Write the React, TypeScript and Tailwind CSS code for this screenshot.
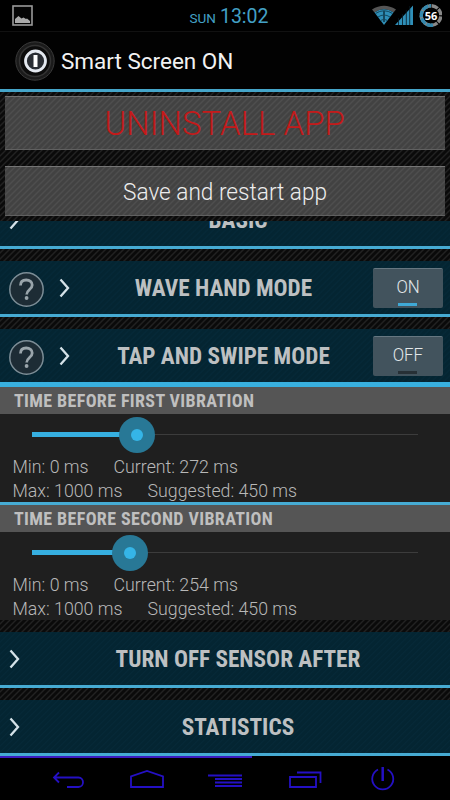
import type { ReactNode } from "react";

interface SliderProps {
  title: string;
  current: number;
  suggested: number;
  max: number;
}

const stripes =
  "bg-[#0c0c0c] bg-[repeating-linear-gradient(135deg,#0a0a0a_0px,#0a0a0a_1.4px,#222_2.8px,#0a0a0a_4.243px)]";
const buttonBg =
  "bg-[repeating-linear-gradient(135deg,#424242_0px,#424242_1.4px,#4e4e4e_2.8px,#424242_4.243px)]";

const StatusBar = () => (
  <div className="flex h-[31px] shrink-0 items-start justify-between bg-black">
    <svg className="mt-[5px] ml-3" width="21" height="21" viewBox="0 0 21 21">
      <rect x="1" y="1" width="19" height="19" fill="#050505" stroke="#999" strokeWidth="1.6" />
      <path d="M3 18v-4l3.500-3 3 2.500 2-1 2.500 1.500 1-.5 3 2.500v2z" fill="#aaa" />
    </svg>
    <div className="mt-[5px] ml-[54px] flex items-baseline gap-[4px] text-[#43a0c6]">
      <span className="text-[13.500px] leading-6">SUN</span>
      <span className="text-[19.500px] leading-6">13:02</span>
    </div>
    <div className="mt-[4px] mr-2 flex">
      <svg width="71" height="24" viewBox="-1 0 71 24">
        <g transform="translate(-1 0)">
          <path d="M1 5.500Q13 -2 25 5.500L22.500 8.500Q13 2 3.500 8.500z" fill="#555" />
          <path d="M3.500 8.500Q13 2 22.500 8.500L13 21z" fill="#2f8fb8" />
          <path d="M4.500 9.500Q13 4 21.500 9.500M7 13Q13 9 19 13M9.500 16.500Q13 14 16.500 16.500" fill="none" stroke="#14495f" strokeWidth="1" />
          <path d="M13 7v11" stroke="#14495f" strokeWidth="2" />
          <path d="M24 21L42 1.500V21z" fill="#2f8fb8" />
          <path d="M27.500 14v7M31.500 10v11M35.300 6v15M38.700 2v19" stroke="#071820" strokeWidth="0.8" />
        </g>
        <circle cx="59" cy="11.500" r="9.800" fill="none" stroke="#888" strokeWidth="3.400" strokeDasharray="6.700 1" transform="rotate(-86 59 11.500)" />
        <path d="M61 21.100A9.800 9.800 0 1 1 59 1.700" fill="none" stroke="#3488ad" strokeWidth="3.400" strokeDasharray="6.700 1" />
        <text x="59" y="15.500" textAnchor="middle" fill="#fff" fontSize="11" fontWeight="700" fontFamily="Open Sans, sans-serif">56</text>
      </svg>
    </div>
  </div>
);

const ActionBar = () => (
  <div className="flex h-[61px] shrink-0 items-center border-t border-b-[3px] border-t-[#111] border-b-[#45a5c9] bg-[#020202] pl-[15px]">
    <svg width="40" height="40" viewBox="0 0 40 40">
      <circle cx="20" cy="20" r="19.200" fill="#1b1b1b" stroke="#3a3a3a" strokeWidth="1" />
      <circle cx="20" cy="20" r="15.500" fill="#0c0c0c" stroke="#333" strokeWidth="1.500" />
      <circle cx="20.500" cy="20" r="10" fill="#292d33" stroke="#e4e9f0" strokeWidth="2.800" />
      <path d="M20.500 14v12" stroke="#fff" strokeWidth="4" />
    </svg>
    <span className="ml-[6px] pt-[3px] text-[22.500px] whitespace-nowrap text-[#f2f2f2]">Smart Screen ON</span>
  </div>
);

const Chevron = ({ className }: { className: string }) => (
  <svg className={className} width="12" height="20" viewBox="0 0 12 20">
    <path d="M1.500 1.500L9 10 1.500 18.500" fill="none" stroke="#d5e2e8" strokeWidth="2.300" />
  </svg>
);

const HelpIcon = () => (
  <svg className="mt-1 ml-2" width="37" height="37" viewBox="0 0 37 37">
    <circle cx="18.500" cy="18.500" r="16.700" fill="#1d2c35" stroke="#7c8d96" strokeWidth="1.500" />
    <path d="M12.500 14.500C12.500 10.500 15 9 18.200 9c3.500 0 6 2 6 5 0 4.500-5.500 4.500-5.500 9.500" fill="none" stroke="#9aa5ab" strokeWidth="2.800" />
    <circle cx="18.600" cy="27" r="1.900" fill="#9aa5ab" />
  </svg>
);

const Toggle = ({ on }: { on: boolean }) => (
  <div className="relative mr-[7px] flex h-10 w-[70px] items-center justify-center rounded-[2px] border-t border-t-[#667781] bg-[#42535d] text-[17.500px] font-light text-[#e3e8ea]">
    <span className="scale-x-[0.96] pb-px">{on ? "ON" : "OFF"}</span>
    <span className={`absolute bottom-[2px] left-[25px] h-[3px] w-[19px] ${on ? "bg-[#3fa9d6]" : "bg-[#273036]"}`} />
  </div>
);

interface RowProps {
  title: string;
  left: ReactNode;
  right?: ReactNode;
}

// rows without a toggle have their title centred in the space after the chevron
const Row = ({ title, left, right }: RowProps) => (
  <div className="relative flex h-[53px] shrink-0 items-center justify-between bg-[#042633] bg-[repeating-linear-gradient(135deg,#042532_0px,#042532_2px,#062938_3px,#042532_4.243px)]">
    <div className="flex items-center">{left}</div>
    <span
      className={`absolute right-0 scale-x-[0.968] text-center text-[24px] font-bold text-[#bdc0c2] [font-stretch:75%] ${right ? "-left-[3px]" : "left-[26px]"}`}
    >
      {title}
    </span>
    {right}
  </div>
);

const Line = () => <div className="h-[3px] shrink-0 bg-[#46abd3]" />;
const Gap = () => <div className={`h-3 shrink-0 ${stripes}`} />;

const SliderPanel = ({ title, current, suggested, max }: SliderProps) => (
  <>
    <div className="flex h-[27px] shrink-0 items-center bg-[#555] pl-[14px] text-[18px] font-bold tracking-[0.36px] text-[#bfbfbf] [font-stretch:75%]">
      <span>{title}</span>
    </div>
    <div className="h-[88px] shrink-0 bg-[#1f1f1f] text-[17.750px] leading-6 font-light whitespace-nowrap text-[#b8b8b8]">
      <div className="relative mr-8 ml-8 flex h-[41px] items-center">
        <div className="h-px w-full bg-[#3c3c3c]" />
        <div
          className="absolute left-0 h-[5px] bg-[#36afe0]"
          style={{ width: `${(current / max) * 100}%` }}
        />
        <div
          className="absolute flex size-9 -translate-x-1/2 items-center justify-center rounded-full bg-[#287896]"
          style={{ left: `${(current / max) * 100}%` }}
        >
          <div className="size-3 rounded-full bg-[#35b5e7]" />
        </div>
      </div>
      <div className="flex gap-[25px] pl-[12.500px]">
        <span>Min: 0 ms</span>
        <span>Current: {current} ms</span>
      </div>
      <div className="flex gap-[25px] pl-[12.500px]">
        <span>Max: {max} ms</span>
        <span>Suggested: {suggested} ms</span>
      </div>
    </div>
  </>
);

const NavBar = () => (
  <div className="h-[45px] shrink-0 bg-black">
    <div className="h-[2px] w-[252px] bg-[#3c1bc0]" />
    <svg width="450" height="43" viewBox="0 757 450 43" fill="none" stroke="#2410c4" strokeWidth="1.800">
      <path d="M59 771.500l-5 5 5 5M54 776.500h24.500c6 0 6 9.500 0 9.500H67" />
      <path d="M131 786v-10.500l16-5.500 16 5.500V786z" />
      <path d="M208 774.500h34M215 778h27M215 781.500h27M215 785h27" />
      <path d="M290 776h26v10h-26zM297 771.500h23.500V782" />
      <path d="M378 768.500a10.500 10.500 0 1 0 9.500 0" />
      <path d="M382.700 766v14" strokeWidth="2.500" />
    </svg>
  </div>
);

export default function App() {
  return (
    <div className="flex h-[800px] w-[450px] flex-col overflow-hidden bg-black font-[Roboto,sans-serif]">
      <StatusBar />
      <ActionBar />
      <div className={`relative z-10 flex h-[129px] shrink-0 flex-col px-[5px] pt-1 ${stripes}`}>
        <div className={`flex h-[54px] items-center justify-center border-t border-b border-t-[#707070] border-b-[#606060] text-[34px] font-light text-[#c41a1a] ${buttonBg}`}>
          <span className="scale-x-[0.972] pt-px">UNINSTALL APP</span>
        </div>
        <div className={`mt-4 flex h-[50px] items-center justify-center border-t border-b border-t-[#757575] border-b-[#606060] text-[23.500px] font-light text-[#ededed] ${buttonBg}`}>
          <span className="scale-x-[0.962] pt-[3px]">Save and restart app</span>
        </div>
      </div>
      <div className="-mt-7 flex shrink-0 flex-col">
        <Row title="BASIC" left={<Chevron className="ml-[9px]" />} />
        <Line />
      </div>
      <Gap />
      <Row
        title="WAVE HAND MODE"
        left={<><HelpIcon /><Chevron className="ml-[14px]" /></>}
        right={<Toggle on />}
      />
      <Line />
      <Gap />
      <Row
        title="TAP AND SWIPE MODE"
        left={<><HelpIcon /><Chevron className="ml-[14px]" /></>}
        right={<Toggle on={false} />}
      />
      <div className="h-[5px] shrink-0 bg-[#38b0df]" />
      <SliderPanel title="TIME BEFORE FIRST VIBRATION" current={272} suggested={450} max={1000} />
      <Line />
      <SliderPanel title="TIME BEFORE SECOND VIBRATION" current={254} suggested={450} max={1000} />
      <Gap />
      <Row title="TURN OFF SENSOR AFTER" left={<Chevron className="ml-[9px]" />} />
      <Line />
      <Gap />
      <Row title="STATISTICS" left={<Chevron className="ml-[9px]" />} />
      <Line />
      <NavBar />
    </div>
  );
}
